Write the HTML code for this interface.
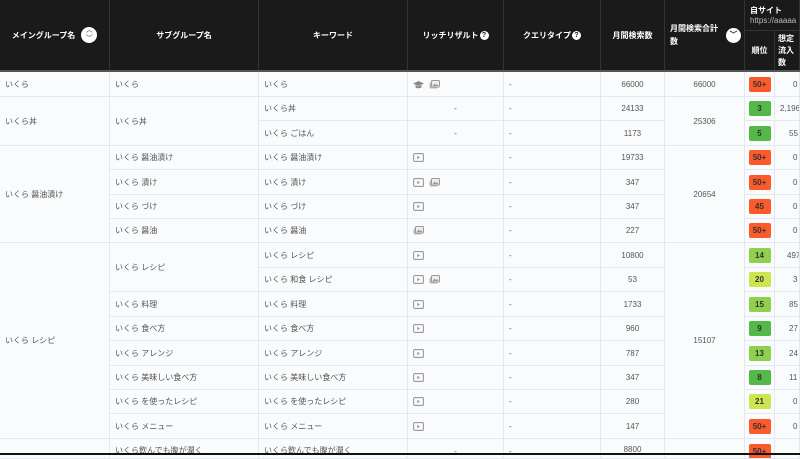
<!DOCTYPE html>
<html><head><meta charset="utf-8"><style>
*{margin:0;padding:0;box-sizing:border-box}
body{width:800px;height:455px;overflow:hidden;background:#fafbfc;font-family:"Liberation Sans","Noto Sans CJK JP",sans-serif;position:relative;color:#555;font-size:8px}
.c{position:absolute;display:flex;align-items:center;border-right:1px solid #e4e9ef;border-bottom:1px solid #e4e9ef;white-space:nowrap;overflow:hidden}
.l{padding-left:5px}.m{justify-content:center}.r{justify-content:flex-end;padding-right:3px}
.h{position:absolute;background:#1a1a1a;color:#fff;font-weight:bold;font-size:8px;display:flex;align-items:center;justify-content:center;border-right:1px solid #333;border-bottom:1px solid #333}
.b{width:22px;height:15px;border-radius:2px;display:flex;align-items:center;justify-content:center;font-weight:bold;color:#333;font-size:8px}
.O{background:#fb5a2a}.G{background:#54b948}.L{background:#8fd14f}.Y{background:#cde64f}
.q{display:inline-block;width:9px;height:9px;border-radius:50%;background:#fff;color:#1a1a1a;font-size:7px;line-height:9px;text-align:center;margin-left:1px}
.ic{display:inline-block;margin-right:5px;vertical-align:middle}
</style></head><body>
<!-- header -->
<div class="h" style="left:0;top:0;width:110px;height:71px">メイングループ名<span style="display:inline-block;width:16px;height:16px;border-radius:50%;background:#fff;margin-left:6px;color:#888;font-size:7px;line-height:8px;text-align:center">︿<br>﹀</span></div>
<div class="h" style="left:110px;top:0;width:149px;height:71px">サブグループ名</div>
<div class="h" style="left:259px;top:0;width:149px;height:71px">キーワード</div>
<div class="h" style="left:408px;top:0;width:96px;height:71px">リッチリザルト<span class="q">?</span></div>
<div class="h" style="left:504px;top:0;width:97px;height:71px">クエリタイプ<span class="q">?</span></div>
<div class="h" style="left:601px;top:0;width:64px;height:71px">月間検索数</div>
<div class="h" style="left:665px;top:0;width:80px;height:71px;justify-content:flex-start;padding-left:5px"><span style="line-height:13px">月間検索合計<br>数</span><span style="position:absolute;left:61px;top:28px;width:15px;height:15px;border-radius:50%;background:#fff;color:#333;font-size:8px;text-align:center;line-height:14px">﹀</span></div>
<div class="h" style="left:745px;top:0;width:55px;height:31px;flex-direction:column;align-items:flex-start;padding-left:5px;font-size:8px"><span>自サイト</span><span style="font-weight:normal;color:#bbb">https://aaaaa</span></div>
<div class="h" style="left:745px;top:31px;width:30px;height:40px">順位</div>
<div class="h" style="left:775px;top:31px;width:25px;height:40px;justify-content:flex-start;padding-left:3px"><span style="line-height:12px">想定<br>流入<br>数</span></div>
<div style="position:absolute;left:0;top:70px;width:800px;height:2px;background:#555"></div>
<!-- body -->
<div id="b"></div>
<div class="c l" style="left:0;top:72px;width:110px;height:25px">いくら</div>
<div class="c l" style="left:0;top:97px;width:110px;height:49px">いくら丼</div>
<div class="c l" style="left:0;top:146px;width:110px;height:97px">いくら 醤油漬け</div>
<div class="c l" style="left:0;top:243px;width:110px;height:196px">いくら レシピ</div>
<div class="c l" style="left:0;top:439px;width:110px;height:20px"></div>

<div class="c l" style="left:110px;top:72px;width:149px;height:25px">いくら</div>
<div class="c l" style="left:110px;top:97px;width:149px;height:49px">いくら丼</div>
<div class="c l" style="left:110px;top:146px;width:149px;height:24px">いくら 醤油漬け</div>
<div class="c l" style="left:110px;top:170px;width:149px;height:25px">いくら 漬け</div>
<div class="c l" style="left:110px;top:195px;width:149px;height:24px">いくら づけ</div>
<div class="c l" style="left:110px;top:219px;width:149px;height:24px">いくら 醤油</div>
<div class="c l" style="left:110px;top:243px;width:149px;height:49px">いくら レシピ</div>
<div class="c l" style="left:110px;top:292px;width:149px;height:25px">いくら 料理</div>
<div class="c l" style="left:110px;top:317px;width:149px;height:24px">いくら 食べ方</div>
<div class="c l" style="left:110px;top:341px;width:149px;height:25px">いくら アレンジ</div>
<div class="c l" style="left:110px;top:366px;width:149px;height:24px">いくら 美味しい食べ方</div>
<div class="c l" style="left:110px;top:390px;width:149px;height:24px">いくら を使ったレシピ</div>
<div class="c l" style="left:110px;top:414px;width:149px;height:25px">いくら メニュー</div>
<div class="c l" style="left:110px;top:439px;width:149px;height:20px;align-items:flex-start;padding-top:6px">いくら飲んでも腹が潤く</div>

<div class="c l" style="left:259px;top:72px;width:149px;height:25px">いくら</div>
<div class="c l" style="left:259px;top:97px;width:149px;height:24px">いくら丼</div>
<div class="c l" style="left:259px;top:121px;width:149px;height:25px">いくら ごはん</div>
<div class="c l" style="left:259px;top:146px;width:149px;height:24px">いくら 醤油漬け</div>
<div class="c l" style="left:259px;top:170px;width:149px;height:25px">いくら 漬け</div>
<div class="c l" style="left:259px;top:195px;width:149px;height:24px">いくら づけ</div>
<div class="c l" style="left:259px;top:219px;width:149px;height:24px">いくら 醤油</div>
<div class="c l" style="left:259px;top:243px;width:149px;height:25px">いくら レシピ</div>
<div class="c l" style="left:259px;top:268px;width:149px;height:24px">いくら 和食 レシピ</div>
<div class="c l" style="left:259px;top:292px;width:149px;height:25px">いくら 料理</div>
<div class="c l" style="left:259px;top:317px;width:149px;height:24px">いくら 食べ方</div>
<div class="c l" style="left:259px;top:341px;width:149px;height:25px">いくら アレンジ</div>
<div class="c l" style="left:259px;top:366px;width:149px;height:24px">いくら 美味しい食べ方</div>
<div class="c l" style="left:259px;top:390px;width:149px;height:24px">いくら を使ったレシピ</div>
<div class="c l" style="left:259px;top:414px;width:149px;height:25px">いくら メニュー</div>
<div class="c l" style="left:259px;top:439px;width:149px;height:20px;align-items:flex-start;padding-top:6px">いくら飲んでも腹が潤く</div>

<svg width="0" height="0" style="position:absolute"><defs>
<symbol id="v" viewBox="0 0 11 9"><rect x="0.6" y="0.6" width="9.8" height="7.8" rx="1.2" fill="none" stroke="#999" stroke-width="1.1"/><path d="M4.3 2.8 L7 4.5 L4.3 6.2Z" fill="#999"/></symbol>
<symbol id="p" viewBox="0 0 11 9"><rect x="0.5" y="2.5" width="8" height="6" rx="1" fill="#bbb"/><rect x="2.5" y="0.5" width="8" height="6.5" rx="1" fill="#eee" stroke="#999"/><path d="M3.5 6 L5.5 3.5 L7 5 L8 4 L9.5 6Z" fill="#999"/></symbol>
<symbol id="g" viewBox="0 0 11 9"><path d="M0 3.5 L5.5 1 L11 3.5 L5.5 6Z" fill="#888"/><path d="M2.5 5 V7.5 Q5.5 9 8.5 7.5 V5 L5.5 6.5Z" fill="#888"/></symbol>
</defs></svg>

<div class="c l" style="left:408px;top:72px;width:96px;height:25px"><svg class="ic" width="11" height="9"><use href="#g"/></svg><svg class="ic" width="11" height="9"><use href="#p"/></svg></div>
<div class="c m" style="left:408px;top:97px;width:96px;height:24px">-</div>
<div class="c m" style="left:408px;top:121px;width:96px;height:25px">-</div>
<div class="c l" style="left:408px;top:146px;width:96px;height:24px"><svg class="ic" width="11" height="9"><use href="#v"/></svg></div>
<div class="c l" style="left:408px;top:170px;width:96px;height:25px"><svg class="ic" width="11" height="9"><use href="#v"/></svg><svg class="ic" width="11" height="9"><use href="#p"/></svg></div>
<div class="c l" style="left:408px;top:195px;width:96px;height:24px"><svg class="ic" width="11" height="9"><use href="#v"/></svg></div>
<div class="c l" style="left:408px;top:219px;width:96px;height:24px"><svg class="ic" width="11" height="9"><use href="#p"/></svg></div>
<div class="c l" style="left:408px;top:243px;width:96px;height:25px"><svg class="ic" width="11" height="9"><use href="#v"/></svg></div>
<div class="c l" style="left:408px;top:268px;width:96px;height:24px"><svg class="ic" width="11" height="9"><use href="#v"/></svg><svg class="ic" width="11" height="9"><use href="#p"/></svg></div>
<div class="c l" style="left:408px;top:292px;width:96px;height:25px"><svg class="ic" width="11" height="9"><use href="#v"/></svg></div>
<div class="c l" style="left:408px;top:317px;width:96px;height:24px"><svg class="ic" width="11" height="9"><use href="#v"/></svg></div>
<div class="c l" style="left:408px;top:341px;width:96px;height:25px"><svg class="ic" width="11" height="9"><use href="#v"/></svg></div>
<div class="c l" style="left:408px;top:366px;width:96px;height:24px"><svg class="ic" width="11" height="9"><use href="#v"/></svg></div>
<div class="c l" style="left:408px;top:390px;width:96px;height:24px"><svg class="ic" width="11" height="9"><use href="#v"/></svg></div>
<div class="c l" style="left:408px;top:414px;width:96px;height:25px"><svg class="ic" width="11" height="9"><use href="#v"/></svg></div>
<div class="c m" style="left:408px;top:439px;width:96px;height:20px;align-items:flex-start;padding-top:8px">-</div>

<div class="c l" style="left:504px;top:72px;width:97px;height:25px">-</div>
<div class="c l" style="left:504px;top:97px;width:97px;height:24px">-</div>
<div class="c l" style="left:504px;top:121px;width:97px;height:25px">-</div>
<div class="c l" style="left:504px;top:146px;width:97px;height:24px">-</div>
<div class="c l" style="left:504px;top:170px;width:97px;height:25px">-</div>
<div class="c l" style="left:504px;top:195px;width:97px;height:24px">-</div>
<div class="c l" style="left:504px;top:219px;width:97px;height:24px">-</div>
<div class="c l" style="left:504px;top:243px;width:97px;height:25px">-</div>
<div class="c l" style="left:504px;top:268px;width:97px;height:24px">-</div>
<div class="c l" style="left:504px;top:292px;width:97px;height:25px">-</div>
<div class="c l" style="left:504px;top:317px;width:97px;height:24px">-</div>
<div class="c l" style="left:504px;top:341px;width:97px;height:25px">-</div>
<div class="c l" style="left:504px;top:366px;width:97px;height:24px">-</div>
<div class="c l" style="left:504px;top:390px;width:97px;height:24px">-</div>
<div class="c l" style="left:504px;top:414px;width:97px;height:25px">-</div>
<div class="c l" style="left:504px;top:439px;width:97px;height:20px;align-items:flex-start;padding-top:8px">-</div>

<div class="c m" style="left:601px;top:72px;width:64px;height:25px">66000</div>
<div class="c m" style="left:601px;top:97px;width:64px;height:24px">24133</div>
<div class="c m" style="left:601px;top:121px;width:64px;height:25px">1173</div>
<div class="c m" style="left:601px;top:146px;width:64px;height:24px">19733</div>
<div class="c m" style="left:601px;top:170px;width:64px;height:25px">347</div>
<div class="c m" style="left:601px;top:195px;width:64px;height:24px">347</div>
<div class="c m" style="left:601px;top:219px;width:64px;height:24px">227</div>
<div class="c m" style="left:601px;top:243px;width:64px;height:25px">10800</div>
<div class="c m" style="left:601px;top:268px;width:64px;height:24px">53</div>
<div class="c m" style="left:601px;top:292px;width:64px;height:25px">1733</div>
<div class="c m" style="left:601px;top:317px;width:64px;height:24px">960</div>
<div class="c m" style="left:601px;top:341px;width:64px;height:25px">787</div>
<div class="c m" style="left:601px;top:366px;width:64px;height:24px">347</div>
<div class="c m" style="left:601px;top:390px;width:64px;height:24px">280</div>
<div class="c m" style="left:601px;top:414px;width:64px;height:25px">147</div>
<div class="c m" style="left:601px;top:439px;width:64px;height:20px;align-items:flex-start;padding-top:6px">8800</div>

<div class="c m" style="left:665px;top:72px;width:80px;height:25px">66000</div>
<div class="c m" style="left:665px;top:97px;width:80px;height:49px">25306</div>
<div class="c m" style="left:665px;top:146px;width:80px;height:97px">20654</div>
<div class="c m" style="left:665px;top:243px;width:80px;height:196px">15107</div>
<div class="c m" style="left:665px;top:439px;width:80px;height:20px"></div>

<div class="c m" style="left:745px;top:72px;width:30px;height:25px"><div class="b O">50+</div></div>
<div class="c m" style="left:745px;top:97px;width:30px;height:24px"><div class="b G">3</div></div>
<div class="c m" style="left:745px;top:121px;width:30px;height:25px"><div class="b G">5</div></div>
<div class="c m" style="left:745px;top:146px;width:30px;height:24px"><div class="b O">50+</div></div>
<div class="c m" style="left:745px;top:170px;width:30px;height:25px"><div class="b O">50+</div></div>
<div class="c m" style="left:745px;top:195px;width:30px;height:24px"><div class="b O">45</div></div>
<div class="c m" style="left:745px;top:219px;width:30px;height:24px"><div class="b O">50+</div></div>
<div class="c m" style="left:745px;top:243px;width:30px;height:25px"><div class="b L">14</div></div>
<div class="c m" style="left:745px;top:268px;width:30px;height:24px"><div class="b Y">20</div></div>
<div class="c m" style="left:745px;top:292px;width:30px;height:25px"><div class="b L">15</div></div>
<div class="c m" style="left:745px;top:317px;width:30px;height:24px"><div class="b G">9</div></div>
<div class="c m" style="left:745px;top:341px;width:30px;height:25px"><div class="b L">13</div></div>
<div class="c m" style="left:745px;top:366px;width:30px;height:24px"><div class="b G">8</div></div>
<div class="c m" style="left:745px;top:390px;width:30px;height:24px"><div class="b Y">21</div></div>
<div class="c m" style="left:745px;top:414px;width:30px;height:25px"><div class="b O">50+</div></div>
<div class="c m" style="left:745px;top:439px;width:30px;height:20px;align-items:flex-start;padding-top:5px"><div class="b O">50+</div></div>

<div class="c" style="left:775px;top:72px;width:25px;height:25px;padding-left:18px">0</div>
<div class="c" style="left:775px;top:97px;width:25px;height:24px;padding-left:5px">2,196</div>
<div class="c" style="left:775px;top:121px;width:25px;height:25px;padding-left:14px">55</div>
<div class="c" style="left:775px;top:146px;width:25px;height:24px;padding-left:18px">0</div>
<div class="c" style="left:775px;top:170px;width:25px;height:25px;padding-left:18px">0</div>
<div class="c" style="left:775px;top:195px;width:25px;height:24px;padding-left:18px">0</div>
<div class="c" style="left:775px;top:219px;width:25px;height:24px;padding-left:18px">0</div>
<div class="c" style="left:775px;top:243px;width:25px;height:25px;padding-left:12px">497</div>
<div class="c" style="left:775px;top:268px;width:25px;height:24px;padding-left:18px">3</div>
<div class="c" style="left:775px;top:292px;width:25px;height:25px;padding-left:14px">85</div>
<div class="c" style="left:775px;top:317px;width:25px;height:24px;padding-left:14px">27</div>
<div class="c" style="left:775px;top:341px;width:25px;height:25px;padding-left:14px">24</div>
<div class="c" style="left:775px;top:366px;width:25px;height:24px;padding-left:14px">11</div>
<div class="c" style="left:775px;top:390px;width:25px;height:24px;padding-left:18px">0</div>
<div class="c" style="left:775px;top:414px;width:25px;height:25px;padding-left:18px">0</div>
<div class="c" style="left:775px;top:439px;width:25px;height:20px"></div>

<div style="position:absolute;left:0;top:453px;width:800px;height:2px;background:#111"></div>
</body></html>
